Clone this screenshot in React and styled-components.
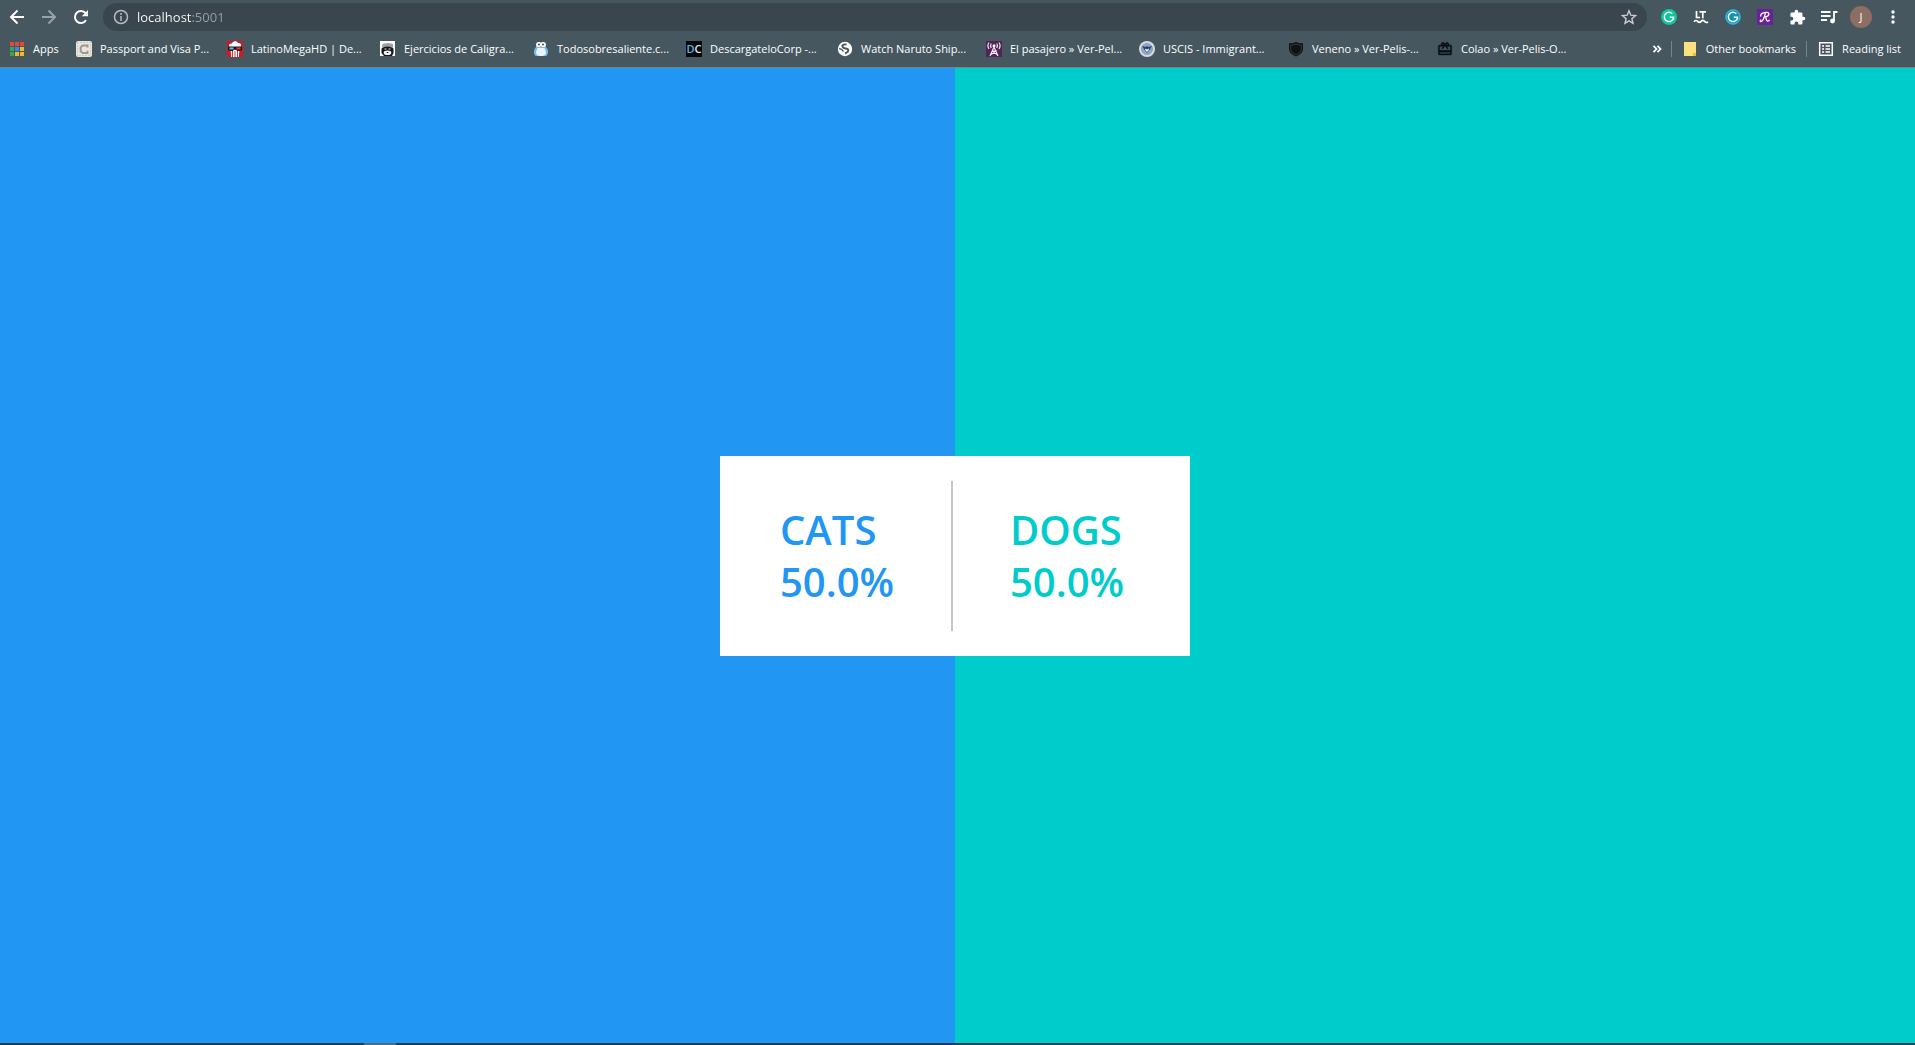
import React from "react";
import styled, { createGlobalStyle } from "styled-components";

const BLUE = "#2196f3";
const TEAL = "#00cccc";

const GlobalStyle = createGlobalStyle`
  *, *::before, *::after { box-sizing: border-box; }
  html, body, #root { height: 100%; }
  body { margin: 0; font-family: "Open Sans", "Noto Sans", sans-serif; }
  button, input { font: inherit; border: 0; padding: 0; margin: 0; background: none; color: inherit; }
  svg { display: block; flex: none; }
`;

const Window = styled.div`
  display: flex;
  flex-direction: column;
  min-height: 100%;
`;

const Chrome = styled.header`
  background: #46575f;
  color: #fff;
  border-bottom: 1px solid #75838a;
`;

const Toolbar = styled.div`
  display: flex;
  align-items: center;
  gap: 6px;
  height: 34px;
  padding: 0 6px 0 1px;
`;

const ButtonGroup = styled.div`
  display: flex;
`;

const IconButton = styled.button`
  display: grid;
  place-items: center;
  width: 32px;
  height: 28px;
  opacity: ${(p) => (p.$dim ? 0.45 : 1)};
`;

const AddressBar = styled.form`
  flex: 1;
  display: flex;
  align-items: center;
  height: 28px;
  padding: 0 2px 0 10px;
  gap: 8px;
  border-radius: 14px;
  background: #39464d;
`;

const AddressInput = styled.input`
  flex: 1;
  min-width: 0;
  font-size: 13px;
  line-height: 20px;
  outline: none;
  color: #fff;
  background: linear-gradient(to right, #fff 55px, #98a2a7 55px);
  background-clip: text;
  -webkit-text-fill-color: transparent;
`;

const Avatar = styled.span`
  display: grid;
  place-items: center;
  width: 22px;
  height: 22px;
  border-radius: 50%;
  background: #8d6e63;
  font-size: 11px;
  line-height: 22px;
`;

const BookmarksBar = styled.nav`
  display: flex;
  align-items: center;
  height: 33px;
  padding: 0 14px 3px 8px;
  font-size: 11px;
  line-height: 18px;
`;

const Bookmark = styled.a`
  display: flex;
  align-items: center;
  gap: 8px;
  flex: none;
  width: ${(p) => (p.$width ? `${p.$width}px` : "auto")};
  color: #fff;
  text-decoration: none;
  white-space: nowrap;
`;

const Spacer = styled.div`
  flex: 1;
`;

const OverflowButton = styled.button`
  display: grid;
  place-items: center;
  width: 28px;
  height: 24px;
`;

const Separator = styled.span`
  width: 1px;
  height: 16px;
  margin-right: 11px;
  margin-left: ${(p) => (p.$wide ? "10px" : "0")};
  background: #77858b;
`;

const Page = styled.main`
  flex: 1;
  display: grid;
  place-items: center;
  padding-right: 5px;
  background: linear-gradient(to right, ${BLUE} calc(50% - 2px), ${TEAL} calc(50% - 2px));
`;

const Card = styled.section`
  display: grid;
  grid-template-columns: 1fr 2px 1fr;
  align-items: center;
  width: 470px;
  height: 200px;
  padding: 25px 6px 25px 0;
  background: #fff;
`;

const Choice = styled.div`
  padding-left: ${(p) => p.$indent}px;
  color: ${(p) => p.$color};
  font-size: 40px;
  font-weight: 600;
  line-height: 52px;
`;

const Line = styled.p`
  margin: 0;
`;

const CardDivider = styled.div`
  align-self: stretch;
  background: #c3c6c9;
`;

const Taskbar = styled.footer`
  height: 2px;
  padding-left: 364px;
  background: #1d3f55;
`;

const ActiveTask = styled.div`
  width: 32px;
  height: 2px;
  background: #4a6c84;
`;

const stroke = { fill: "none", stroke: "currentColor", strokeWidth: 2 };

const Back = () => (
  <svg width="16" height="16" viewBox="0 0 16 16" {...stroke}><path d="M15 8H2.5M8.5 1.5 2 8l6.5 6.5" /></svg>
);
const Forward = () => (
  <svg width="16" height="16" viewBox="0 0 16 16" {...stroke}><path d="M1 8h12.500M7.500 1.500 14 8l-6.500 6.500" /></svg>
);
const Reload = () => (
  <svg width="16" height="16" viewBox="0 0 16 16">
    <path d="M13 11.200A6 6 0 1 1 12.600 4.200" {...stroke} />
    <path d="M15 1v6.200H8.800z" fill="currentColor" />
  </svg>
);
const Info = () => (
  <svg width="16" height="16" viewBox="0 0 16 16" fill="none" stroke="#b4bcc0" strokeWidth="1.500">
    <circle cx="8" cy="8" r="6.500" /><path d="M8 7v5M8 4v2" />
  </svg>
);
const Star = () => (
  <svg width="16" height="16" viewBox="0 0 16 16" fill="none" stroke="#c9ced1" strokeWidth="1.400">
    <path d="m8 1.800 1.800 4.400 4.700.4-3.600 3.100 1.100 4.600L8 11.900l-4 2.400 1.100-4.600L1.500 6.600l4.700-.4z" />
  </svg>
);
const Grammar = ({ color, ring }) => (
  <svg width="16" height="16" viewBox="0 0 16 16">
    <circle cx="8" cy="8" r="8" fill={color} />
    {ring && <circle cx="8" cy="8" r="7" fill="none" stroke="#55bdd6" strokeWidth="1" />}
    <path d="M11.300 4.800A4.600 4.600 0 1 0 12.500 8.300H8.800M12.500 8.300v2.500" fill="none" stroke="#e9fffa" strokeWidth="1.500" />
  </svg>
);
const LanguageTool = () => (
  <svg width="16" height="16" viewBox="0 0 16 16" {...stroke} strokeWidth="1.700">
    <path d="M3.500 2v6.500H7M6.500 2.800H13M9.800 2.800v6.500" />
    <path d="M1 12.800q1.800-2.400 3.600-.4t3.500 0 3.500 0 3.400.4" />
  </svg>
);
const Rakuten = () => (
  <svg width="16" height="16" viewBox="0 0 16 16">
    <path d="M0 0h16v16H0z" fill="#6b1f99" />
    <path d="M8.500 4.200C7.500 8 6.300 12 4.200 12.600c-1.500.2-1.200-1.500 0-1.700M4 7.500C2.500 5 7 3.200 9.800 3.300c3.600.2 2.300 4.500-1.800 4.700 1.500.2 1 4 2.400 4.200 1 .1 1.800-.8 2.200-1.500" fill="none" stroke="#fff" strokeWidth="1.300" />
  </svg>
);
const Puzzle = () => (
  <svg width="17" height="17" viewBox="0 0 24 24" fill="currentColor">
    <path d="M20.500 11H19V7a2 2 0 0 0-2-2h-4V3.500a2.500 2.500 0 0 0-5 0V5H4a2 2 0 0 0-2 2v3.800h1.500a2.700 2.700 0 0 1 0 5.400H2V20c0 1.100.9 2 2 2h3.800v-1.500a2.700 2.700 0 0 1 5.400 0V22H17a2 2 0 0 0 2-2v-4h1.500a2.500 2.500 0 0 0 0-5z" />
  </svg>
);
const MusicList = () => (
  <svg width="17" height="16" viewBox="0 0 17 16">
    <path d="M0 3h9.500M0 7h9.500M0 11h6M13 12V3h3.500" {...stroke} strokeWidth="1.800" />
    <circle cx="11.500" cy="12" r="2.400" fill="currentColor" />
  </svg>
);
const Kebab = () => (
  <svg width="4" height="14" viewBox="0 0 4 14" fill="currentColor">
    <circle cx="2" cy="2" r="1.700" /><circle cx="2" cy="7" r="1.700" /><circle cx="2" cy="12" r="1.700" />
  </svg>
);
const AppsGrid = () => (
  <svg width="17" height="16" viewBox="0 0 17 16">
    {["#e4483c", "#e4483c", "#e4483c", "#35a558", "#3d86e8", "#f0b92d", "#35a558", "#f0b92d", "#f0b92d"].map((c, i) => (
      <rect key={i} x={2 + (i % 3) * 5} y={1 + Math.floor(i / 3) * 5} width="4" height="4" fill={c} />
    ))}
  </svg>
);
const Passport = () => (
  <svg width="16" height="16" viewBox="0 0 16 16">
    <rect width="16" height="16" rx="2" fill="#e9e5df" />
    <rect x="1.500" y="1.500" width="13" height="13" fill="none" stroke="#b9aea2" strokeDasharray="1 2" />
    <path d="M11.500 6.500V4.500H6.500L4.700 6.300v3.900L6.500 12h5V9.800" fill="none" stroke="#a0978d" strokeWidth="2" />
  </svg>
);
const Popcorn = () => (
  <svg width="16" height="16" viewBox="0 0 16 16">
    <path d="M0 0h16v16H0z" fill="#d31820" />
    <path d="M2.500 6C1 4 3 2 5 2.500 6-.5 10-.5 11 2c3-.3 4 2 2.500 4z" fill="#fff" />
    <path d="M3.500 9h9l-.8 7H4.300z" fill="#fff" />
    <path d="M5.500 10v6M8 10v6M10.500 10v6" stroke="#d31820" strokeWidth=".9" />
    <path d="M1 5.500h14v3.500l-2 1h-3L8.500 8h-1L6 10H3L1 9z" fill="#141c26" />
    <path d="M2.500 6.500h4v2h-4z" fill="#4cc4ec" /><path d="M9.500 6.500h4v2h-4z" fill="#ed3434" />
  </svg>
);
const Panda = () => (
  <svg width="16" height="16" viewBox="0 0 16 16">
    <path d="M0 0h15v15H0z" fill="#fff" />
    <path d="M2.500 7Q1 2 5 2.500q3-1 6 0Q14 2 12.800 7z" fill="#9da0a1" />
    <path d="M1.500 7.500q6-4 12 0V12L12 15H4L1.500 12z" fill="#15191b" />
    <ellipse cx="7.500" cy="11.800" rx="3.800" ry="2.300" fill="#f3f4f4" />
    <path d="M4.500 7.500h2v1h-2zM8.500 7.500h2v1h-2z" fill="#e4e6e6" />
    <path d="M6.800 11h1.500v1H6.800z" fill="#16191b" />
  </svg>
);
const Penguin = () => (
  <svg width="16" height="16" viewBox="0 0 16 16">
    <path d="M8 1c4 0 4 3 5 5 3 3 2.500 8 0 9H3C.5 14 0 9 3 6c1-2 1-5 5-5z" fill="#75bbee" />
    <path d="M4.500 7h7l1.500 4c0 3-2 4-5 4s-5-1-5-4z" fill="#e8f5fe" />
    <circle cx="5.700" cy="3.500" r="2.600" fill="#fff" /><circle cx="10.300" cy="3.500" r="2.600" fill="#fff" />
    <circle cx="6" cy="3.500" r=".9" fill="#27394c" /><circle cx="10" cy="3.500" r=".9" fill="#27394c" />
    <path d="m6.500 5.500 1.500 2 1.500-2z" fill="#f6a52c" />
  </svg>
);
const Initials = styled.span`
  display: flex;
  justify-content: center;
  width: 16px;
  height: 16px;
  background: #06090c;
  color: #e5e8ea;
  font-size: 11px;
  font-weight: 600;
  line-height: 16px;

  b { font-weight: 600; color: #67aeea; }
`;
const Globe = () => (
  <svg width="16" height="16" viewBox="0 0 16 16">
    <circle cx="8" cy="8" r="7.200" fill="#fff" />
    <path d="M9.500 3.500C6 3 4.500 4.500 6 6.300s5 .7 5.300 2.700-2 3-3.300 3.500" fill="none" stroke="#46575f" strokeWidth="1.900" />
    <path d="M2.200 7.500q3 .5 4.300 3" fill="none" stroke="#46575f" strokeWidth="1.600" />
  </svg>
);
const Tower = () => (
  <svg width="16" height="16" viewBox="0 0 16 16">
    <path d="M0 0h16v16H0z" fill="#502456" />
    <path d="M8 6 4 15M8 6l4 9M6.200 10h3.600L5 13.500M6.200 10l4.800 3.500M3 1.500Q.8 4.500 3 8M13 1.500Q15.200 4.500 13 8M5.300 2.500Q3.800 4.500 5.300 7M10.700 2.500Q12.200 4.500 10.700 7" fill="none" stroke="#f0e6f2" strokeWidth="1.200" />
    <circle cx="8" cy="4.800" r="1.500" fill="#fff" />
  </svg>
);
const Seal = () => (
  <svg width="16" height="16" viewBox="0 0 16 16">
    <circle cx="8" cy="8" r="8" fill="#d7dbe1" />
    <circle cx="8" cy="8" r="5.500" fill="#8babc9" stroke="#8790ab" strokeWidth=".8" />
    <path d="m3 5 3.500 1L8 5l1.500 1L13 5l-2.500 4L8 12 5.500 9z" fill="#293f75" />
    <path d="m6 7.500 2 1 2-1-.5 2L8 11 6.500 9.500z" fill="#fff" />
  </svg>
);
const Shield = () => (
  <svg width="16" height="16" viewBox="0 0 16 16">
    <path d="M8 1q3.500 1.500 7 1.200V8q0 5-7 7.500Q1 13 1 8V2.200Q4.500 2.500 8 1z" fill="#0c1215" />
    <path d="M8 3q2.500 1.200 5.300 1.100V8q0 4-5.300 5.800Q2.700 12 2.700 8V4.100Q5.500 4.200 8 3z" fill="none" stroke="#39464c" strokeWidth=".8" />
  </svg>
);
const Gift = () => (
  <svg width="16" height="16" viewBox="0 0 24 24" fill="#0b1013" stroke="#0b1013" strokeWidth=".6">
    <path d="M20 6h-2.180A3 3 0 0 0 12.500 3.350L12 4.020l-.5-.68A3 3 0 0 0 6.180 6H4a2 2 0 0 0-2 2v11c0 1.110.89 2 2 2h16a2 2 0 0 0 2-2V8a2 2 0 0 0-2-2zm-5-2a1 1 0 1 1 0 2 1 1 0 0 1 0-2zM9 4a1 1 0 1 1 0 2 1 1 0 0 1 0-2zm11 15H4v-2h16zm0-5H4V8h5.080L7 10.830 8.620 12 12 7.400l3.380 4.600L17 10.830 14.920 8H20z" />
  </svg>
);
const Chevrons = () => (
  <svg width="10" height="8" viewBox="0 0 10 8" {...stroke} strokeWidth="1.800"><path d="m1.500.8 3 3.200-3 3.200M5.500.8l3 3.200-3 3.200" /></svg>
);
const Folder = () => (
  <svg width="15" height="16" viewBox="0 0 15 16">
    <path d="M1 1h12v11l-3 3H1z" fill="#fbe07d" /><path d="M10 15v-3h3v3z" fill="#e9bd35" />
  </svg>
);
const ReadingList = () => (
  <svg width="16" height="16" viewBox="0 0 16 16" {...stroke} strokeWidth="1.500">
    <path d="M1.700 1.700h12.600v12.600H1.700z" /><path d="M4 5h2M7.500 5H12M4 8h2M7.500 8H12M4 11h2M7.500 11H12" strokeWidth="1.700" />
  </svg>
);

const bookmarks = [
  { label: "Apps", icon: <AppsGrid />, width: 68 },
  { label: "Passport and Visa P...", icon: <Passport />, width: 151 },
  { label: "LatinoMegaHD | De...", icon: <Popcorn />, width: 153 },
  { label: "Ejercicios de Caligra...", icon: <Panda />, width: 153 },
  { label: "Todosobresaliente.c...", icon: <Penguin />, width: 153 },
  { label: "DescargateloCorp -...", icon: <Initials><b>D</b>C</Initials>, width: 151 },
  { label: "Watch Naruto Ship...", icon: <Globe />, width: 149 },
  { label: "El pasajero » Ver-Pel...", icon: <Tower />, width: 153 },
  { label: "USCIS - Immigrant...", icon: <Seal />, width: 149 },
  { label: "Veneno » Ver-Pelis-...", icon: <Shield />, width: 149 },
  { label: "Colao » Ver-Pelis-O...", icon: <Gift /> },
];

const extensions = [
  { label: "Grammar checker", icon: <Grammar color="#15c39a" /> },
  { label: "LanguageTool", icon: <LanguageTool /> },
  { label: "Writing assistant", icon: <Grammar color="#168fb5" ring /> },
  { label: "Rakuten", icon: <Rakuten /> },
  { label: "Extensions", icon: <Puzzle /> },
  { label: "Media controls", icon: <MusicList /> },
  { label: "Profile", icon: <Avatar>J</Avatar> },
  { label: "Menu", icon: <Kebab /> },
];

export default function App() {
  return (
    <Window>
      <GlobalStyle />
      <Chrome>
        <Toolbar>
          <ButtonGroup>
            <IconButton aria-label="Back"><Back /></IconButton>
            <IconButton aria-label="Forward" $dim><Forward /></IconButton>
            <IconButton aria-label="Reload"><Reload /></IconButton>
          </ButtonGroup>
          <AddressBar onSubmit={(e) => e.preventDefault()}>
            <Info />
            <AddressInput aria-label="Address" defaultValue="localhost:5001" spellCheck={false} />
            <IconButton type="button" aria-label="Bookmark this page"><Star /></IconButton>
          </AddressBar>
          <ButtonGroup>
            {extensions.map((e) => (
              <IconButton key={e.label} aria-label={e.label}>{e.icon}</IconButton>
            ))}
          </ButtonGroup>
        </Toolbar>
        <BookmarksBar aria-label="Bookmarks">
          {bookmarks.map((b) => (
            <Bookmark key={b.label} href="#" $width={b.width}>{b.icon}{b.label}</Bookmark>
          ))}
          <Spacer />
          <OverflowButton aria-label="More bookmarks"><Chevrons /></OverflowButton>
          <Separator />
          <Bookmark href="#"><Folder />Other bookmarks</Bookmark>
          <Separator $wide />
          <Bookmark href="#"><ReadingList />Reading list</Bookmark>
        </BookmarksBar>
      </Chrome>
      <Page>
        <Card aria-label="Results">
          <Choice $color={BLUE} $indent={60}>
            <Line>CATS</Line>
            <Line>50.0%</Line>
          </Choice>
          <CardDivider />
          <Choice $color={TEAL} $indent={57}>
            <Line>DOGS</Line>
            <Line>50.0%</Line>
          </Choice>
        </Card>
      </Page>
      <Taskbar><ActiveTask /></Taskbar>
    </Window>
  );
}
